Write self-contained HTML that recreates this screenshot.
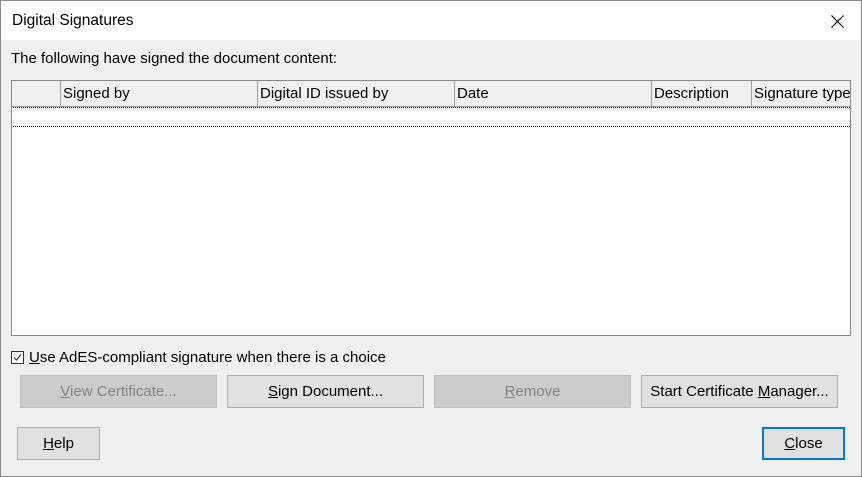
<!DOCTYPE html><html><head><style>
*{margin:0;padding:0;box-sizing:border-box}
body{width:862px;height:477px;background:#f0f0f0;font-family:"Liberation Sans",sans-serif;font-size:15px;color:#000;position:relative;overflow:hidden}
.win{position:absolute;left:0;top:0;width:862px;height:477px;border:1px solid #8a8a8a}
.title{position:absolute;left:1px;top:1px;width:859px;height:39px;background:#fff}
.t{position:absolute;white-space:nowrap}
.btn{position:absolute;height:33px;background:#e1e1e1;border:1px solid #adadad;text-align:center;line-height:31px;font-size:15px;white-space:nowrap}
.dis{background:#cccccc;border-color:#bfbfbf;color:#838383}
.tbl{position:absolute;left:11px;top:80px;width:840px;height:256px;background:#fff;border:1px solid #828790}
.hdr{position:absolute;left:0;top:0;width:838px;height:26px;background:#f0f0f0;border-bottom:1px solid #a0a0a0}
.col{position:absolute;top:0;height:25px;border-left:1px solid #a0a0a0;padding-left:2px;line-height:25px;white-space:nowrap;overflow:hidden}
.dot{position:absolute;left:1px;width:837px;border-top:1px dotted #000}
u{text-decoration:underline}
</style></head><body>
<div class="win"></div>
<div class="title"></div>
<div class="t" style="left:12px;top:12px;font-size:15.5px">Digital Signatures</div>
<svg style="position:absolute;left:831px;top:15px" width="13" height="13"><path d="M0.5 0.5L12.5 12.5M12.5 0.5L0.5 12.5" stroke="#000" stroke-width="1.1"/></svg>
<div class="t" style="left:11px;top:50px">The following have signed the document content:</div>
<div class="tbl"><div class="hdr">
<div class="col" style="left:48px;width:197px">Signed by</div>
<div class="col" style="left:245px;width:197px">Digital ID issued by</div>
<div class="col" style="left:442px;width:197px">Date</div>
<div class="col" style="left:639px;width:100px">Description</div>
<div class="col" style="left:739px;width:99px">Signature type</div>
</div>
<div class="dot" style="top:26px"></div><div class="dot" style="top:45px"></div>
</div>
<div style="position:absolute;left:11px;top:351px;width:13px;height:13px;border:1px solid #333;background:#fff"></div>
<svg style="position:absolute;left:12px;top:352px" width="11" height="11"><path d="M2 5.5L4.5 8L9 2.5" fill="none" stroke="#333" stroke-width="1.1"/></svg>
<div class="t" style="left:29px;top:349px"><u>U</u>se AdES-compliant signature when there is a choice</div>
<div class="btn dis" style="left:20px;top:375px;width:197px"><u>V</u>iew Certificate...</div>
<div class="btn" style="left:227px;top:375px;width:197px"><u>S</u>ign Document...</div>
<div class="btn dis" style="left:434px;top:375px;width:197px"><u>R</u>emove</div>
<div class="btn" style="left:641px;top:375px;width:197px">Start Certificate <u>M</u>anager...</div>
<div class="btn" style="left:17px;top:427px;width:83px"><u>H</u>elp</div>
<div class="btn" style="left:762px;top:427px;width:83px;border:2px solid #0078d7;line-height:29px"><u>C</u>lose</div>
</body></html>
